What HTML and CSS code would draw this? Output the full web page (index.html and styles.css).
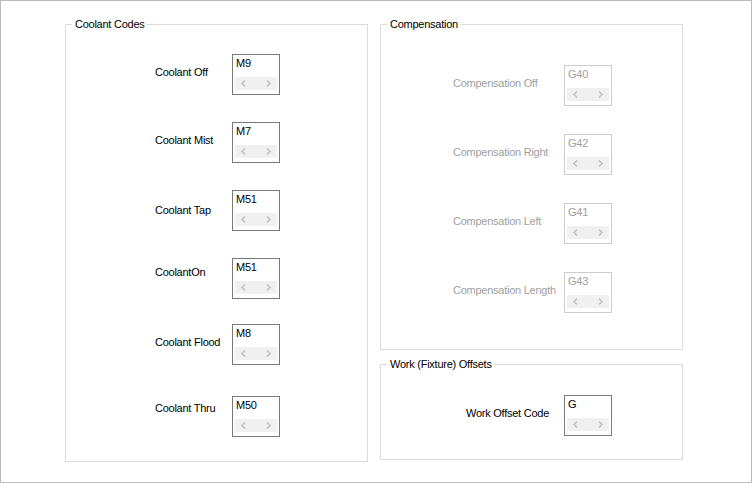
FILE: index.html
```html
<!DOCTYPE html>
<html lang="en">
<head>
  <meta charset="UTF-8" />
  <title>Post Processor Codes</title>
  <link rel="stylesheet" href="styles.css">
</head>
<body>

  <div class="window">

    <section class="group coolant">
      <span class="group-title">Coolant Codes</span>
      <div class="field">
        <span class="field-label">Coolant Off</span>
        <div class="spin">
          <span class="spin-value">M9</span>
          <div class="spin-bar">
            <span class="spin-btn"><svg viewBox="0 0 5 7"><polyline points="4,0.5 1,3.5 4,6.5" /></svg></span>
            <span class="spin-btn"><svg viewBox="0 0 5 7"><polyline points="1,0.5 4,3.5 1,6.5" /></svg></span>
          </div>
        </div>
      </div>
      <div class="field">
        <span class="field-label">Coolant Mist</span>
        <div class="spin">
          <span class="spin-value">M7</span>
          <div class="spin-bar">
            <span class="spin-btn"><svg viewBox="0 0 5 7"><polyline points="4,0.5 1,3.5 4,6.5" /></svg></span>
            <span class="spin-btn"><svg viewBox="0 0 5 7"><polyline points="1,0.5 4,3.5 1,6.5" /></svg></span>
          </div>
        </div>
      </div>
      <div class="field">
        <span class="field-label">Coolant Tap</span>
        <div class="spin">
          <span class="spin-value">M51</span>
          <div class="spin-bar">
            <span class="spin-btn"><svg viewBox="0 0 5 7"><polyline points="4,0.5 1,3.5 4,6.5" /></svg></span>
            <span class="spin-btn"><svg viewBox="0 0 5 7"><polyline points="1,0.5 4,3.5 1,6.5" /></svg></span>
          </div>
        </div>
      </div>
      <div class="field">
        <span class="field-label">CoolantOn</span>
        <div class="spin">
          <span class="spin-value">M51</span>
          <div class="spin-bar">
            <span class="spin-btn"><svg viewBox="0 0 5 7"><polyline points="4,0.5 1,3.5 4,6.5" /></svg></span>
            <span class="spin-btn"><svg viewBox="0 0 5 7"><polyline points="1,0.5 4,3.5 1,6.5" /></svg></span>
          </div>
        </div>
      </div>
      <div class="field">
        <span class="field-label">Coolant Flood</span>
        <div class="spin">
          <span class="spin-value">M8</span>
          <div class="spin-bar">
            <span class="spin-btn"><svg viewBox="0 0 5 7"><polyline points="4,0.5 1,3.5 4,6.5" /></svg></span>
            <span class="spin-btn"><svg viewBox="0 0 5 7"><polyline points="1,0.5 4,3.5 1,6.5" /></svg></span>
          </div>
        </div>
      </div>
      <div class="field">
        <span class="field-label">Coolant Thru</span>
        <div class="spin">
          <span class="spin-value">M50</span>
          <div class="spin-bar">
            <span class="spin-btn"><svg viewBox="0 0 5 7"><polyline points="4,0.5 1,3.5 4,6.5" /></svg></span>
            <span class="spin-btn"><svg viewBox="0 0 5 7"><polyline points="1,0.5 4,3.5 1,6.5" /></svg></span>
          </div>
        </div>
      </div>
    </section>

    <div class="side">

      <section class="group compensation disabled">
        <span class="group-title">Compensation</span>
        <div class="field">
          <span class="field-label">Compensation Off</span>
          <div class="spin">
            <span class="spin-value">G40</span>
            <div class="spin-bar">
              <span class="spin-btn"><svg viewBox="0 0 5 7"><polyline points="4,0.5 1,3.5 4,6.5" /></svg></span>
              <span class="spin-btn"><svg viewBox="0 0 5 7"><polyline points="1,0.5 4,3.5 1,6.5" /></svg></span>
            </div>
          </div>
        </div>
        <div class="field">
          <span class="field-label">Compensation Right</span>
          <div class="spin">
            <span class="spin-value">G42</span>
            <div class="spin-bar">
              <span class="spin-btn"><svg viewBox="0 0 5 7"><polyline points="4,0.5 1,3.5 4,6.5" /></svg></span>
              <span class="spin-btn"><svg viewBox="0 0 5 7"><polyline points="1,0.5 4,3.5 1,6.5" /></svg></span>
            </div>
          </div>
        </div>
        <div class="field">
          <span class="field-label">Compensation Left</span>
          <div class="spin">
            <span class="spin-value">G41</span>
            <div class="spin-bar">
              <span class="spin-btn"><svg viewBox="0 0 5 7"><polyline points="4,0.5 1,3.5 4,6.5" /></svg></span>
              <span class="spin-btn"><svg viewBox="0 0 5 7"><polyline points="1,0.5 4,3.5 1,6.5" /></svg></span>
            </div>
          </div>
        </div>
        <div class="field">
          <span class="field-label">Compensation Length</span>
          <div class="spin">
            <span class="spin-value">G43</span>
            <div class="spin-bar">
              <span class="spin-btn"><svg viewBox="0 0 5 7"><polyline points="4,0.5 1,3.5 4,6.5" /></svg></span>
              <span class="spin-btn"><svg viewBox="0 0 5 7"><polyline points="1,0.5 4,3.5 1,6.5" /></svg></span>
            </div>
          </div>
        </div>
      </section>

      <section class="group offsets">
        <span class="group-title">Work (Fixture) Offsets</span>
        <div class="field">
          <span class="field-label">Work Offset Code</span>
          <div class="spin">
            <span class="spin-value">G</span>
            <div class="spin-bar">
              <span class="spin-btn"><svg viewBox="0 0 5 7"><polyline points="4,0.5 1,3.5 4,6.5" /></svg></span>
              <span class="spin-btn"><svg viewBox="0 0 5 7"><polyline points="1,0.5 4,3.5 1,6.5" /></svg></span>
            </div>
          </div>
        </div>
      </section>

    </div>
  </div>

</body>
</html>
```

FILE: styles.css
```css
* { box-sizing: border-box; }

body {
  margin: 0;
  background: #fff;
  color: #000;
  font-family: "Liberation Sans", Arial, sans-serif;
  font-size: 11px;
  letter-spacing: -0.25px;
}

.window {
  width: 752px;
  height: 483px;
  border: 1px solid #bcbcbc;
  padding: 23px 0 0 64px;
  display: flex;
  gap: 12px;
}

.side {
  display: flex;
  flex-direction: column;
  gap: 14px;
}

/* group boxes */
.group {
  position: relative;
  width: 303px;
  border: 1px solid #dcdcdc;
}

.group-title {
  position: absolute;
  top: -7px;
  left: 6px;
  padding: 0 2px 0 3px;
  background: #fff;
  line-height: 13px;
  white-space: nowrap;
}

.coolant {
  height: 438px;
  padding: 29px 0 0 89px;
}

.compensation {
  height: 326px;
  padding: 40px 0 0 72px;
}

.offsets {
  height: 96px;
  padding: 30px 0 0 85px;
}

/* label + spin rows */
.field { display: flex; }

.field-label {
  line-height: 13px;
  padding-top: 12px;
  white-space: nowrap;
}

.coolant .field-label { width: 77px; }
.compensation .field-label { width: 111px; }
.offsets .field-label { width: 98px; }

.coolant .field + .field { margin-top: 27px; }
.coolant .field:nth-of-type(5) { margin-top: 25px; }
.coolant .field:nth-of-type(6) { margin-top: 31px; }
.coolant .field:nth-of-type(3) .field-label { padding-top: 14px; }
.coolant .field:nth-of-type(4) .field-label { padding-top: 8px; }
.coolant .field:nth-of-type(6) .field-label { padding-top: 6px; }

.compensation .field + .field { margin-top: 28px; }

/* spin box */
.spin {
  width: 48px;
  height: 41px;
  border: 1px solid #7a7a7a;
  background: #fff;
}

.spin-value {
  display: block;
  height: 15px;
  padding: 2px 0 0 3px;
  line-height: 13px;
}

.spin-bar {
  width: 42px;
  height: 13px;
  margin: 7px 0 0 2px;
  background: #f0f0f0;
  display: flex;
  justify-content: space-between;
}

.spin-btn {
  width: 17px;
  display: flex;
  align-items: center;
  justify-content: center;
}

.spin-btn svg {
  width: 5px;
  height: 7px;
  fill: none;
  stroke: #bdbdbd;
  stroke-width: 1.4;
}

/* disabled group */
.disabled .field-label,
.disabled .spin-value { color: #a0a0a0; }

.disabled .spin { border-color: #cccccc; }
```
